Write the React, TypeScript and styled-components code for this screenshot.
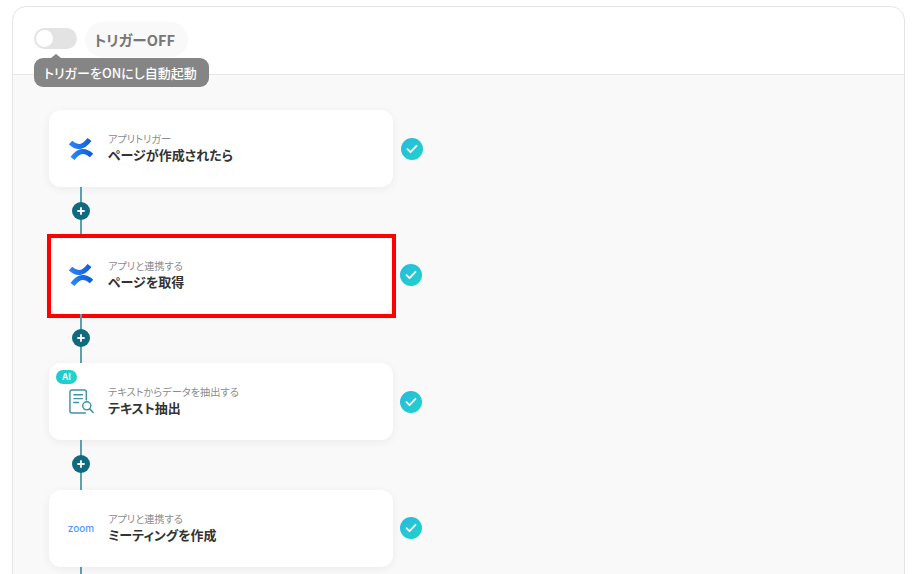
import React from 'react'
import styled, { createGlobalStyle } from 'styled-components'

const GlobalStyle = createGlobalStyle`
  html, body {
    margin: 0;
    height: 100%;
    background: #fff;
    overflow: hidden;
  }
  body {
    font-family: "Noto Sans CJK JP", "Noto Sans", sans-serif;
    font-feature-settings: "palt";
  }
`

const ConfluenceIcon = () => (
  <svg width="24" height="24" viewBox="0 0 24 24" fill="none" strokeWidth="5">
    <defs>
      <linearGradient id="cfTop" gradientUnits="userSpaceOnUse" x1="22" y1="2" x2="2" y2="8">
        <stop offset="0" stopColor="#0c5fd8" />
        <stop offset="1" stopColor="#2a80f5" />
      </linearGradient>
      <linearGradient id="cfBottom" gradientUnits="userSpaceOnUse" x1="22" y1="18" x2="2" y2="22">
        <stop offset="0" stopColor="#0c5fd8" />
        <stop offset="1" stopColor="#2b8aff" />
      </linearGradient>
    </defs>
    <path stroke="url(#cfTop)" d="M1.500 5.500C8 11.500 14 11 20.500 2.500" />
    <path stroke="url(#cfBottom)" d="M22.500 18.500C16 12.500 10 13 3.500 21.500" />
  </svg>
)

const TextExtractIcon = () => (
  <svg width="25" height="25" viewBox="0 0 26 26" fill="none" stroke="#3f93a8" strokeWidth="1.500" strokeLinecap="round">
    <path d="M18 11.500V3A2 2 0 0 0 16 1H3A2 2 0 0 0 1 3v20a2 2 0 0 0 2 2h14" />
    <path d="M5 6h9M5 10h9M5 14h5" />
    <circle cx="18.500" cy="17.500" r="4.200" />
    <path d="M21.500 20.800l3.500 3.500" />
  </svg>
)

const CheckIcon = () => (
  <svg width="12" height="10" viewBox="0 0 12 10" fill="none" stroke="#fff" strokeWidth="1.800" strokeLinecap="round" strokeLinejoin="round">
    <path d="M1.500 5.200l3 3 6-6.400" />
  </svg>
)

const PlusIcon = () => (
  <svg width="8" height="8" viewBox="0 0 8 8" stroke="#fff" strokeWidth="1.800" strokeLinecap="round">
    <path d="M4 1v6M1 4h6" />
  </svg>
)

interface StepProps {
  label: string,
  title: string,
  icon: React.ReactNode,
  ai?: boolean,
  highlighted?: boolean,
  checkGap?: number
}

const Step: React.FC<StepProps> = ({ label, title, icon, ai, highlighted, checkGap = 7 }) => (
  <StepRow $gap={checkGap}>
    <Card>
      {ai && <AiBadge>AI</AiBadge>}
      {highlighted && <Highlight />}
      <IconSlot>{icon}</IconSlot>
      <CardText>
        <CardLabel>{label}</CardLabel>
        <CardTitle>{title}</CardTitle>
      </CardText>
    </Card>
    <CheckBadge><CheckIcon /></CheckBadge>
  </StepRow>
)

const Connector = () => (
  <ConnectorWrap>
    <AddButton><PlusIcon /></AddButton>
  </ConnectorWrap>
)

const App: React.FC = () => {
  return (
    <>
      <GlobalStyle />
      <Page>
        <Panel>
          <Header>
            <Toggle><ToggleKnob /></Toggle>
            <StatusPill>トリガーOFF</StatusPill>
            <Tooltip>トリガーをONにし自動起動</Tooltip>
          </Header>
          <Canvas>
            <Step label="アプリトリガー" title="ページが作成されたら" icon={<ConfluenceIcon />} checkGap={8} />
            <Connector />
            <Step label="アプリと連携する" title="ページを取得" icon={<ConfluenceIcon />} highlighted />
            <Connector />
            <Step label="テキストからデータを抽出する" title="テキスト抽出" icon={<TextExtractIcon />} ai />
            <Connector />
            <Step label="アプリと連携する" title="ミーティングを作成" icon={<ZoomMark>zoom</ZoomMark>} />
            <TailLine />
          </Canvas>
        </Panel>
      </Page>
    </>
  )
}

const Page = styled.div`
  height: 574px;
  padding: 6px 8px 0 12px;
  box-sizing: border-box;
  overflow: hidden;
`

const Panel = styled.div`
  height: 600px;
  border: 1px solid #e4e4e4;
  border-radius: 14px;
  background: #fff;
  overflow: hidden;
`

const Header = styled.div`
  position: relative;
  height: 68px;
  display: flex;
  align-items: flex-start;
  padding: 15px 0 0 21px;
  box-sizing: border-box;
  border-bottom: 1px solid #e6e6e6;
`

const Toggle = styled.div`
  width: 43px;
  height: 21px;
  margin-top: 6px;
  border-radius: 11px;
  background: #e3e3e3;
  display: flex;
  align-items: center;
  padding-left: 2px;
  box-sizing: border-box;
`

const ToggleKnob = styled.div`
  width: 17px;
  height: 17px;
  border-radius: 50%;
  background: #fff;
`

const StatusPill = styled.div`
  margin-left: 8px;
  width: 103px;
  height: 35px;
  padding-left: 9px;
  box-sizing: border-box;
  border-radius: 18px;
  background: #f9f9f9;
  color: #777;
  font-size: 14.600px;
  font-weight: 700;
  line-height: 35px;
`

const Tooltip = styled.div`
  position: absolute;
  left: 21px;
  top: 51px;
  z-index: 2;
  width: 175px;
  height: 29px;
  padding-left: 10px;
  box-sizing: border-box;
  border-radius: 9px;
  background: #858585;
  color: #fff;
  font-size: 13px;
  font-weight: 500;
  line-height: 29px;
  white-space: nowrap;

  &::before {
    content: '';
    position: absolute;
    left: 17px;
    top: -4px;
    border-left: 5px solid transparent;
    border-right: 5px solid transparent;
    border-bottom: 4px solid #858585;
  }
`

const Canvas = styled.div`
  height: 532px;
  background: #f9f9f9;
  padding: 35px 0 0 36px;
  box-sizing: border-box;
`

const StepRow = styled.div<{ $gap: number }>`
  display: flex;
  align-items: center;
  gap: ${props => props.$gap}px;
`

const Card = styled.div`
  position: relative;
  width: 344px;
  height: 77px;
  box-sizing: border-box;
  display: flex;
  align-items: center;
  padding-left: 19px;
  border-radius: 12px;
  background: #fff;
  box-shadow: 0 2px 10px rgba(0, 0, 0, 0.06);
`

const Highlight = styled.div`
  position: absolute;
  left: -2px;
  top: -3px;
  width: 349px;
  height: 84px;
  box-sizing: border-box;
  border: 4px solid #f00;
`

const AiBadge = styled.div`
  position: absolute;
  left: 7px;
  top: 7px;
  width: 21px;
  height: 14px;
  border-radius: 7px;
  background: linear-gradient(90deg, #22c7d6, #1fd6c6);
  color: #fff;
  font-size: 9px;
  font-weight: 700;
  line-height: 14px;
  text-align: center;
`

const IconSlot = styled.div`
  width: 26px;
  height: 26px;
  display: flex;
  align-items: center;
  justify-content: center;
  flex-shrink: 0;
`

const ZoomMark = styled.span`
  font-family: "Inter", "Liberation Sans", sans-serif;
  font-size: 10px;
  font-weight: 500;
  color: #4f9bff;
`

const CardText = styled.div`
  margin-left: 14px;
  padding-bottom: 3px;
  display: flex;
  flex-direction: column;
`

const CardLabel = styled.div`
  font-size: 10.200px;
  line-height: 15px;
  color: #8c8c8c;
`

const CardTitle = styled.div`
  font-size: 13px;
  font-weight: 700;
  line-height: 17px;
  color: #333;
`

const CheckBadge = styled.div`
  width: 22px;
  height: 22px;
  border-radius: 50%;
  background: linear-gradient(135deg, #2bb8e0, #1fd4c8);
  display: flex;
  align-items: center;
  justify-content: center;
`

const ConnectorWrap = styled.div`
  position: relative;
  width: 64px;
  height: 49.500px;
  padding-bottom: 1px;
  box-sizing: border-box;
  display: flex;
  align-items: center;
  justify-content: center;

  &::before {
    content: '';
    position: absolute;
    left: 31px;
    top: 0;
    bottom: 0;
    width: 2px;
    background: #5e9fae;
  }
`

const AddButton = styled.div`
  position: relative;
  width: 18px;
  height: 18px;
  border-radius: 50%;
  background: #0f6a80;
  display: flex;
  align-items: center;
  justify-content: center;
`

const TailLine = styled.div`
  width: 2px;
  height: 20px;
  margin-left: 31px;
  background: #5e9fae;
`

export default App
